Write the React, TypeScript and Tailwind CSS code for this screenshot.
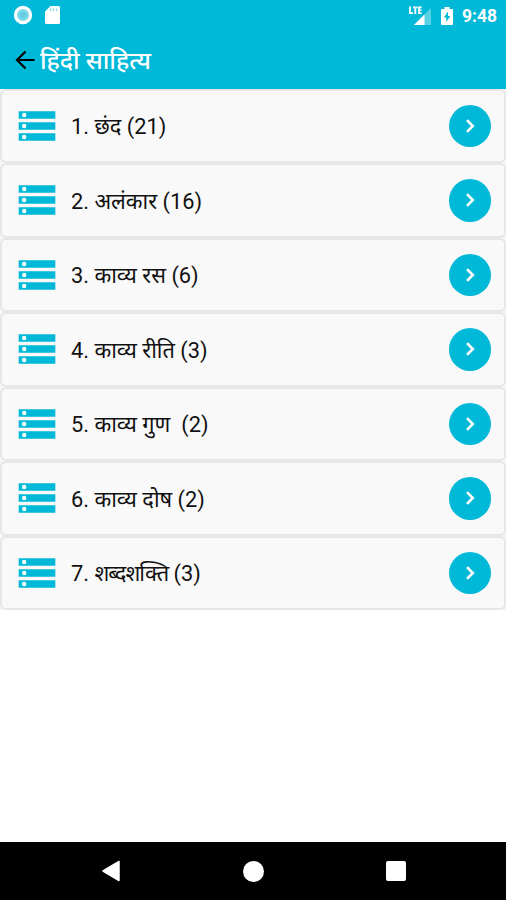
import React from 'react'

const topics = [
    { title: 'छंद', count: 21, titleClass: '' },
    { title: 'अलंकार', count: 16, titleClass: '' },
    { title: 'काव्य रस', count: 6, titleClass: '' },
    { title: 'काव्य रीति', count: 3, titleClass: '' },
    { title: 'काव्य गुण ', count: 2, titleClass: '' },
    { title: 'काव्य दोष', count: 2, titleClass: '' },
    { title: 'शब्दशक्ति', count: 3, titleClass: 'tracking-[-0.9px]' },
]

const StatusBar = () => (
    <div className="flex h-[30px] items-center justify-between pl-[13px] pr-[9px] text-white">
        <div className="flex items-center gap-[12px]">
            <svg width="20" height="20" viewBox="0 0 20 20">
                <circle cx="10" cy="10" r="7.6" fill="#7fd9e8" stroke="white" strokeWidth="3.2" />
                <circle cx="10" cy="10" r="3.5" fill="#63cfe2" />
            </svg>
            <svg width="16" height="20" viewBox="0 0 16 20">
                <path d="M5.5 1H13.5Q15 1 15 2.5V17.5Q15 19 13.5 19H1.5Q0 19 0 17.5V6.5Z" fill="white" />
                <path d="M5.5 3.5V6M8.5 3.5V6M11.5 3.5V6" stroke="#7fd9e8" strokeWidth="1.2" />
            </svg>
        </div>
        <div className="flex items-center pt-[2px]">
            <svg width="24" height="20" viewBox="0 0 24 20" className="mr-[9px]">
                <path d="M23 2V19H6Z" fill="white" fillOpacity="0.35" />
                <path d="M16.5 8.5V19H6Z" fill="white" />
                <path d="M2 0.5V7.2H5M5 1.3H9.6M7.3 1.3V8M13.6 1.3H11V7.2H13.6M11 4.2H13.4" fill="none" stroke="white" strokeWidth="1.8" />
            </svg>
            <svg width="12" height="20" viewBox="0 0 12 20" className="mr-[9px]">
                <path d="M3.5 1H8.5V3H11Q12 3 12 4V18Q12 19 11 19H1Q0 19 0 18V4Q0 3 1 3H3.5Z" fill="white" />
                <path d="M7 5.5L2.8 11.5H5.3V16L9.3 10H7Z" fill="#00b8d8" />
            </svg>
            <span className="pt-[2px] text-[17.5px] font-bold leading-none">9:48</span>
        </div>
    </div>
)

const StorageIcon = () => (
    <svg width="44" height="44" viewBox="0 0 24 24" className="shrink-0">
        <path d="M2 4H22V8H2ZM2 10H22V14H2ZM2 16H22V20H2Z" fill="#00b8d8" />
        <circle cx="5" cy="6" r="1.2" fill="white" />
        <circle cx="5" cy="12" r="1.2" fill="white" />
        <circle cx="5" cy="18" r="1.2" fill="white" />
    </svg>
)

const TopicItem = ({
    index,
    title,
    count,
    titleClass,
}: {
    index: number
    title: string
    count: number
    titleClass: string
}) => (
    <li className="flex h-[74.5px] items-center rounded-md border-2 border-[#e6e7e7] bg-[#f9f9f9] pl-[13px] pr-[13px]">
        <StorageIcon />
        <span className="ml-3 flex-1 whitespace-pre pt-[3px] text-[21.8px] leading-8 text-[#111]">
            {index}. <span className={titleClass}>{title}</span> ({count})
        </span>
        <span className="flex size-[42.5px] items-center justify-center rounded-full bg-[#00b8d8]">
            <svg width="12" height="16" viewBox="0 0 12 16">
                <path d="M3 2.2L8.8 8L3 13.8" fill="none" stroke="white" strokeWidth="2.6" />
            </svg>
        </span>
    </li>
)

const NavBar = () => (
    <div className="flex h-[58px] items-center justify-between bg-black pl-[101px] pr-[100px]">
        <svg width="20" height="22" viewBox="0 0 20 22">
            <path d="M18 1.5V20.5L2 11Z" fill="white" stroke="white" strokeWidth="1.5" strokeLinejoin="round" />
        </svg>
        <span className="size-[21px] rounded-full bg-white" />
        <span className="size-[20px] rounded-[2px] bg-white" />
    </div>
)

const App = () => {
    return (
        <div className="flex h-[900px] w-[506px] flex-col overflow-hidden bg-white font-['Roboto','Noto_Sans_Devanagari','Noto_Sans',sans-serif]">
            <header className="h-[88.5px] bg-[#00b8d8]">
                <StatusBar />
                <div className="flex h-[59px] items-center pl-[15px]">
                    <svg width="20" height="20" viewBox="0 0 20 20">
                        <path d="M19.5 10H2M10.5 1.5L2 10L10.5 18.5" fill="none" stroke="black" strokeWidth="2.2" />
                    </svg>
                    <h1 className="ml-[5px] pt-[2px] text-[24.5px] font-medium leading-8 text-white">हिंदी साहित्य</h1>
                </div>
            </header>
            <main className="flex-1">
                <ul className="bg-[#f4f5f5]">
                    {topics.map((topic, i) => (
                        <TopicItem key={topic.title} index={i + 1} {...topic} />
                    ))}
                </ul>
            </main>
            <NavBar />
        </div>
    )
}

export default App
